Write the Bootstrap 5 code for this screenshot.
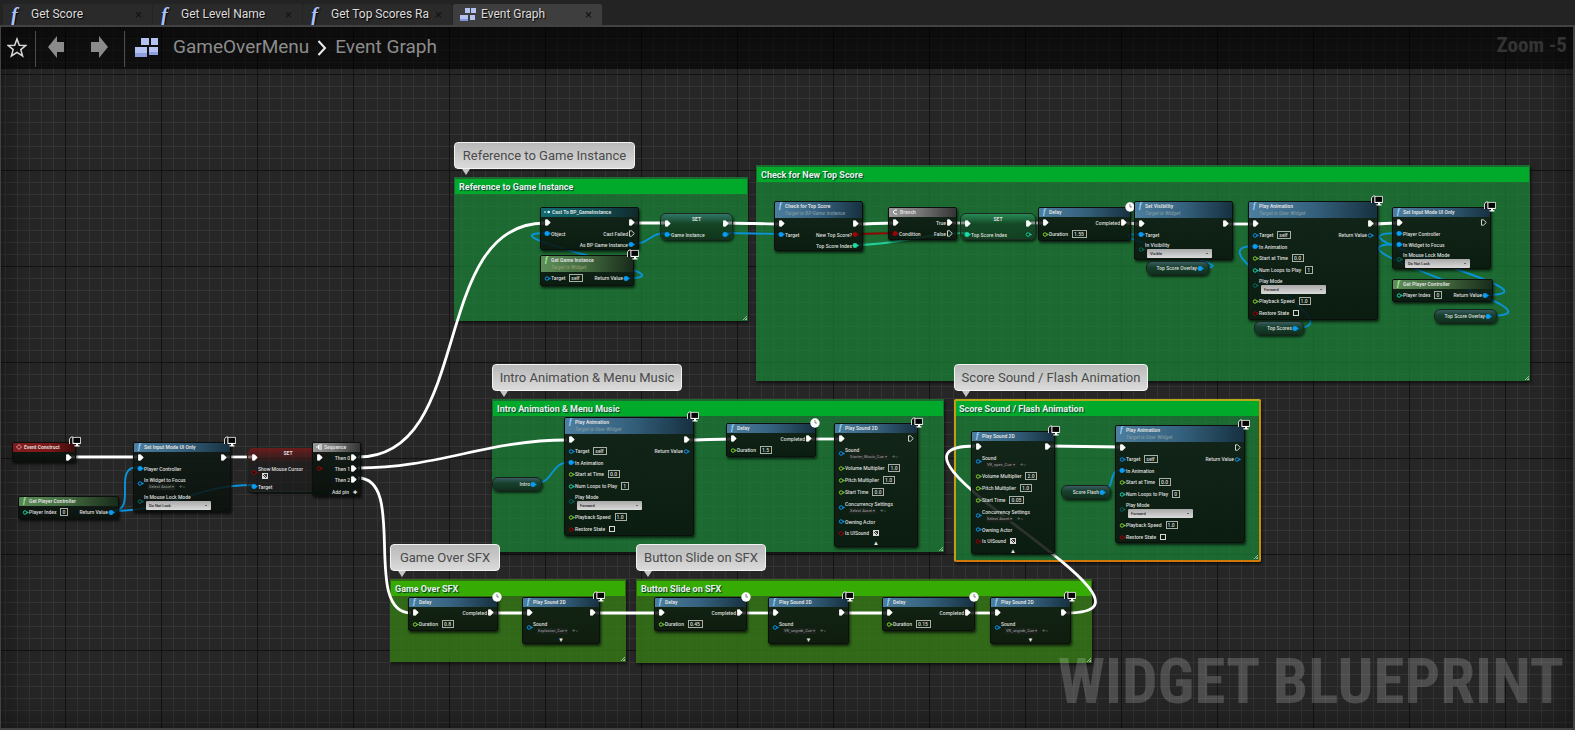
<!DOCTYPE html>
<html lang="en">
<head>
<meta charset="utf-8">
<meta name="viewport" content="width=device-width, initial-scale=1">
<title>GameOverMenu - Event Graph</title>
<link href="https://cdn.jsdelivr.net/npm/bootstrap@5.3.0/dist/css/bootstrap.min.css" rel="stylesheet">
<style>
  body { background: #232323; color: #d6d6d6; font-family: "Roboto Condensed", Roboto, "Liberation Sans", sans-serif; }

  /* document tabs */
  .tabs-strip { padding: 3px 3px 0; }
  .doc-tab { width: 150px; height: 22px; background: #2a2a2a; border-top: 1px solid #303030; color: #dcdcdc; padding: 0 6px;
    font: 12px/20px Roboto, sans-serif; text-shadow: 1px 1px 1px #000; border-radius: 3px 3px 0 0; }
  .doc-tab.active { background: #3e3e3e; border-top-color: #b5a316; }
  .doc-tab a { color: inherit; line-height: 19px; }
  .doc-tab button { color: #131313; font-size: 13px; line-height: 20px; }
  .fn-mark { width: 14px; font: italic bold 20px/20px "Liberation Serif", serif; color: #a9c2ff; padding-left: 2px; }

  /* graph surface */
  .graph { border: 2px solid #424242; border-left-width: 1px; background-color: #262626;
    background-image:
      linear-gradient(90deg, #131313 1px, transparent 1px), linear-gradient(#131313 1px, transparent 1px),
      linear-gradient(90deg, #343434 1px, transparent 1px), linear-gradient(#343434 1px, transparent 1px);
    background-size: 96px 96px, 96px 96px, 12px 12px, 12px 12px;
    background-position: 64px 47px, 64px 47px, 4px 11px, 4px 11px; }
  .graph::after { content: ""; position: absolute; inset: 0; pointer-events: none; box-shadow: inset 0 0 36px rgba(0,0,0,.5); }
  .crumbs { height: 42px; background: rgba(0,0,0,.6); color: #8c8c8c; font: 19px/40px Roboto, sans-serif; z-index: 3; padding-left: 6px; }
  .crumbs a { color: inherit; }
  .rule { width: 1px; height: 36px; background: #4c4c4c; }
  .zoom-level { color: #343434; font: bold 21px/36px "Roboto Condensed", "Liberation Sans Narrow", Roboto, sans-serif; padding-right: 6px; }
  .watermark { right: 9px; bottom: 12px; font: bold 63px/68px "Roboto Condensed", "Liberation Sans Narrow", Roboto, sans-serif;
    color: rgba(255,255,255,.18); z-index: 2; }
  .wires { inset: 0; width: 100%; height: 100%; fill: none; }

  /* comment boxes */
  .note { background: rgba(25,130,55,.75); box-shadow: 1px 2px 3px rgba(0,0,0,.6); padding: 2px 1px; }
  .note h2 { height: 15px; margin: 0; padding: 0 4px; background: #02aa2b; color: #e6f2e6; font: bold 9px/16px Roboto, sans-serif; text-shadow: 1px 1px 1px #033; }
  .note.lime { background: rgba(52,124,22,.78); }
  .note.lime h2 { background: #35ab03; }
  .note.picked { border: 2px solid #c79a10; border-color: #b9a916 #d08a0c #d0780c #c0a012; border-radius: 2px; padding: 0; }
  .note.picked h2 { padding: 0 3px; }
  .grip { right: 1px; bottom: 1px; width: 6px; height: 6px; background: repeating-linear-gradient(135deg, transparent 0 1px, #9db99d 1px 2px); clip-path: polygon(100% 0, 100% 100%, 0 100%); }
  .bubble { height: 27px; border: 1px solid #f2f2f2; border-radius: 4px; color: #4a4a4a;
    background: linear-gradient(rgba(190,190,190,.96), rgba(226,226,226,.96)); font: 13px/25px Roboto, sans-serif; }
  .bubble::after { content: ""; position: absolute; left: 7px; top: 26px; border: 4px solid transparent; border-top: 6px solid #c4c4c4; border-bottom: 0; }

  /* nodes */
  .bp { font: 500 5px/8px Roboto, sans-serif; color: #dedede; border-radius: 2px; border: 1px solid #0c0f0d;
    background: linear-gradient(rgba(16,26,20,.86), rgba(8,16,11,.86)); box-shadow: 1px 2px 3px rgba(0,0,0,.7); }
  .bp header { height: 9px; padding: 0 3px; border-radius: 1px 1px 0 0; font-weight: 700; line-height: 9px; }
  .bp header.tall { height: 16px; line-height: 8px; }
  .bp header i { font: italic bold 8px/8px "Liberation Serif", serif; color: #9bd4ff; width: 7px; padding-left: 1px; }
  .bp header svg { width: 6px; height: 6px; margin: 1px 2px 0 0; flex: none; }
  .bp header small { display: block; font: italic 500 5px/7px Roboto, sans-serif; color: #7f98a0; }
  .call header { background: linear-gradient(95deg, #4d7f9f, #35617e 50%, #16303f); }
  .pure header { background: linear-gradient(95deg, #5e8f5a, #42693f 50%, #182a19); }
  .pure header i { color: #a6f09a; }
  .pure header small { color: #8b9b6a; }
  .event header { background: linear-gradient(95deg, #8e2020, #7a1717 60%, #3a0c0c); }
  .cast header { background: linear-gradient(95deg, #126a70, #0f4e52 60%, #12282a); }
  .flow header { background: linear-gradient(95deg, #9a9a9a, #777 45%, #333); }
  .setter { border-radius: 6px; border: 1px solid #1c2a22; background: linear-gradient(rgba(70,130,160,.5), rgba(14,36,22,.55) 40%, rgba(10,26,16,.65)); }
  .setter.teal { background: linear-gradient(rgba(50,170,120,.5), rgba(14,46,28,.55) 40%, rgba(12,36,22,.6)); }
  .setter.red { background: linear-gradient(rgba(130,24,24,.75), rgba(30,26,26,.6) 35%, rgba(24,24,24,.6)); }
  .setter header { height: 4px; line-height: 10px; background: none; }
  .pill { border-radius: 6px; border: 1px solid #17241b; background: linear-gradient(#3a5a60, #16402c 45%, #12301f); }
  .pin-row { height: 11px; padding: 0 3px; white-space: nowrap; }
  .pill .pin-row { padding-right: 4px; }
  .h12 { height: 12px; } .h14 { height: 14px; } .h18 { height: 18px; } .h19 { height: 19px; }
  .pin { width: 7px; height: 7px; flex: none; }
  .bp input[type=text] { border: 1px solid #a9b0aa; background: transparent; color: inherit; font: inherit; height: 8px; padding: 0 1px; line-height: 6px; border-radius: 0; }
  .bp input[type=checkbox] { appearance: none; width: 6px; height: 6px; border: 1px solid #d8d8d8; margin: 0; }
  .bp input[type=checkbox]:checked { background: linear-gradient(45deg, #ddd 30%, #333 30% 45%, #ddd 45% 60%, #333 60%); }
  .bp select { appearance: none; display: block; width: 65px; height: 9px; border: 0; border-radius: 1px; padding: 0 3px; color: #222; font: 500 4px/9px Roboto, sans-serif; background: linear-gradient(#a9a9a9, #dadada); }
  .drop { margin-left: 2px; }
  .drop::after { content: ""; position: absolute; right: 4px; top: 4px; border: 1px solid transparent; border-top-color: #111; }
  .asset { font-size: 4px; line-height: 6px; color: #858c87; }
  .asset button { background: #1b211d; color: inherit; font: inherit; padding: 0 1px; border: 0; }
  .expander { height: 8px; color: #e8e8e8; font-size: 6px; line-height: 8px; }
  .marker { right: -6px; top: -7px; width: 12px; height: 11px; }
</style>
</head>
<body class="vh-100 d-flex flex-column overflow-hidden">

<nav class="tabs-strip d-flex" aria-label="Open graphs" id="tabs"></nav>

<main class="graph flex-grow-1 position-relative overflow-hidden">
  <div class="crumbs position-relative d-flex align-items-start">
    <button class="btn p-0 border-0 mt-2" aria-label="Favourite"><svg class="d-block" width="20" height="26" viewBox="0 0 20 24" fill="none" stroke="#d8d8d8" stroke-width="1.5"><path d="M10 3l2.300 6.200 6.700.2-5.200 4.200 1.800 6.400-5.600-3.700-5.600 3.700 1.800-6.400L1 9.400l6.700-.2z"/></svg></button>
    <span class="rule mt-1 ms-2"></span>
    <button class="btn p-0 border-0 ms-2 mt-2 ps-1" aria-label="Back"><svg class="d-block" width="18" height="24" viewBox="0 0 18 24"><path d="M0 12L9 1v6h7v10H9v6z" fill="#8b8b8b"/></svg></button>
    <button class="btn p-0 border-0 ms-4 mt-2" aria-label="Forward"><svg class="d-block" width="18" height="24" viewBox="0 0 18 24"><path d="M18 12L9 1v6H1v10h8v6z" fill="#8b8b8b"/></svg></button>
    <span class="rule mt-1 ms-3"></span>
    <svg class="ms-2 mt-2 me-2" width="28" height="24" viewBox="0 0 28 24"><g fill="#b4c2f0"><path d="M8 3h8v7H8zM18 3h7v7h-7zM2 12h12v10H2zM16 12h9v8h-9z"/></g><path d="M2 18h12v4H2zM16 17h9v3h-9z" fill="#8e9fe0"/></svg>
    <a class="text-decoration-none ms-1" href="#">GameOverMenu</a>
    <svg class="mt-2 mx-2" width="10" height="24" viewBox="0 0 10 24" fill="none" stroke="#eee" stroke-width="2"><path d="M1.500 6L8 13 1.500 20"/></svg>
    <a class="text-decoration-none" href="#">Event Graph</a>
    <span class="zoom-level ms-auto">Zoom -5</span>
  </div>
  <div id="notes"></div>
  <svg class="wires position-absolute" id="wires" aria-hidden="true"></svg>
  <div id="nodes"></div>
  <div id="bubbles"></div>
  <div class="watermark position-absolute">WIDGET BLUEPRINT</div>
</main>

<script src="https://cdn.jsdelivr.net/npm/bootstrap@5.3.0/dist/js/bootstrap.bundle.min.js"></script>
<script>
// Node coordinates are window coordinates; the surface starts below the tab strip and inside its border.
const OX = 1, OY = 27;
const at = (x, y, w) => `left:${x - OX}px;top:${y - OY}px;width:${w}px`;
const C = { blue: '#0a9df5', green: '#86d92c', teal: '#1fdba6', dim: '#0b6b62', red: '#9a0505', exec: '#fff' };
let seq = 0;

// ---- tabs
const widget = '<svg width="18" height="16" viewBox="0 0 18 16"><g fill="#b4c2f0"><path d="M6 1h5v5H6zM12 1h5v5h-5zM1 8h8v6H1zM11 8h5v5h-5z"/></g><path d="M1 12h8v2H1z" fill="#8294dc"/></svg>';
document.getElementById('tabs').innerHTML = ['Get Score', 'Get Level Name', 'Get Top Scores Ra', 'Event Graph'].map((t, i) =>
  `<div class="doc-tab d-flex align-items-center border-end border-dark ${i === 3 ? 'active' : ''}">
    ${i === 3 ? widget : '<span class="fn-mark" aria-hidden="true">f</span>'}
    <a href="#" class="text-decoration-none text-nowrap ${i === 3 ? 'ms-1' : 'ms-1 ps-1'}">${t}</a>
    <button class="btn p-0 border-0 ms-auto me-1" aria-label="Close ${t}">×</button></div>`).join('');

// ---- comment boxes: x, y, w, h, title, class, bubble width
const notes = [
  [454, 177, 294, 144, 'Reference to Game Instance', '', 181],
  [756, 165, 774, 216, 'Check for New Top Score', '', 0],
  [492, 399, 452, 153, 'Intro Animation & Menu Music', '', 190],
  [954, 399, 307, 163, 'Score Sound / Flash Animation', 'picked', 194],
  [390, 579, 236, 83, 'Game Over SFX', 'lime', 110],
  [636, 579, 456, 84, 'Button Slide on SFX', 'lime', 130]];
document.getElementById('notes').innerHTML = notes.map(([x, y, w, h, t, c]) =>
  `<section class="note position-absolute ${c}" style="${at(x, y, w)};height:${h}px"><h2>${t}</h2><span class="grip position-absolute"></span></section>`).join('');
document.getElementById('bubbles').innerHTML = notes.filter(n => n[6]).map(([x, y, , , t, , bw]) =>
  `<div class="bubble position-absolute text-center text-nowrap" style="${at(x, y - 35, bw)}">${t}</div>`).join('');

// ---- wires
const curve = (x1, y1, x2, y2, d) => `M${x1 - OX} ${y1 - OY}C${x1 + d - OX} ${y1 - OY} ${x2 - d - OX} ${y2 - OY} ${x2 - OX} ${y2 - OY}`;
const execs = [[71,457,137,457,20],[225,457,252,457,9],[634,223,667,223,9],[727,223,780,224,9],[857,224,893,223,9],[953,223,967,223,4],
  [1031,223,1043,223,4],[1126,223,1140,224,4],[1227,224,1254,224,9],[1373,224,1397,223,9],[688,440,731,439,9],[811,439,840,439,9],
  [493,613,528,613,9],[596,613,660,613,9],[742,613,774,613,9],[844,613,888,613,9],[970,613,996,613,9],[1049,446,1120,447,9],
  [358,457,545,223,117],[358,468,567,440,80],[358,478,411,613,50],[1067,613,975,446,127]];
const blues = [[112,511,138,467,27],[112,511,253,485,60],[627,278,547,233,75],[632,244,667,233,18],[725,233,780,234,9],[1200,268,1141,234,60],
  [1295,328,1255,246,66],[1485,295,1399,233,92],[1488,316,1399,244,96],[533,484,571,462,22],[1102,491,1121,470,14]];
const path = (list, color, w) => list.map(a => `<path d="${curve(...a)}" stroke="${color}" stroke-width="${w}"/>`).join('');
document.getElementById('wires').innerHTML = path(execs, '#fff', 2.8) + path(blues, '#0a93da', 1.9)
  + path([[855,234,895,233,9]], '#8c0606', 1.8) + path([[855,245,967,233,45]], '#22cf98', 1.8);

// ---- pins and rows
const pin = (c, on) => c === 'exec'
  ? `<svg class="pin" viewBox="0 0 7 7"><path d="M1.500 .8h2l2.800 2.700-2.800 2.700h-2z" fill="${on ? '#fff' : 'none'}" stroke="#fff" stroke-width=".8"/></svg>`
  : `<svg class="pin" viewBox="0 0 7 7"><circle cx="3" cy="3.500" r="${on ? 2.2 : 1.7}" fill="${on ? C[c] : '#08110c'}" stroke="${C[c]}" stroke-width="${on ? .6 : 1}"/><path d="M5.200 2.200L7 3.500 5.200 4.800z" fill="${C[c]}"/></svg>`;
// left side: [colour, connected, label, kind, value]; right side: [colour, connected, label]
function left(l) {
  if (!l) return '<span></span>';
  const [c, on, label = '', kind, v] = l, id = 'f' + (++seq);
  let body = label ? `<span>${label}</span>` : '';
  if (kind === 'val') body = `<label for="${id}">${label}</label><input type="text" class="ms-1" id="${id}" value="${v}" style="width:${v === 'self' ? 14 : v.length === 1 ? 8 : v.length * 3 + 3}px">`;
  if (kind === 'box') body = `<label for="${id}">${label}</label><input type="checkbox" class="ms-1" id="${id}" ${v ? 'checked' : ''}>`;
  if (kind === 'under') body = `<div><label class="d-block" for="${id}">${label}</label><input type="checkbox" class="d-block ms-1" id="${id}" checked></div>`;
  if (kind === 'sel') body = `<div><label class="d-block" for="${id}">${label}</label><div class="drop position-relative"><select id="${id}"><option>${v}</option></select></div></div>`;
  if (kind === 'asset') body = `<div><span class="d-block">${label}</span><div class="asset d-flex ms-1"><button type="button">${v}</button><span class="ms-1">✢ ⌕</span></div></div>`;
  return `<div class="d-flex align-items-center">${pin(c, on)}<div class="d-flex align-items-center">${body}</div></div>`;
}
const right = r => r ? `<div class="d-flex align-items-center"><span>${r[2] || ''}</span>${r[0] === 'plus' ? '<b class="ms-1">✚</b>' : pin(r[0], r[1])}</div>` : '<span></span>';
const height = (l, h) => h || (l && { val: 12, box: 12, sel: 19, asset: 18, under: 18 }[l[3]]) || 11;
const row = ([l, r, h]) => `<div class="pin-row h${height(l, h)} d-flex justify-content-between align-items-center">${left(l)}${right(r)}</div>`;

const E = ['exec', 1], E0 = ['exec', 0];
const animRows = (out, loops, start) => [[E, out], [['blue', 0, 'Target', 'val', 'self'], ['blue', 0, 'Return Value']], [['blue', 1, 'In Animation']],
  [['green', 0, 'Start at Time', 'val', start]], [['teal', 0, 'Num Loops to Play', 'val', loops]], [['dim', 0, 'Play Mode', 'sel', 'Forward']],
  [['green', 0, 'Playback Speed', 'val', '1.0']], [['red', 0, 'Restore State', 'box', 0]]];
const soundRows = (out, asset, vol, start) => [[E, out], [['blue', 0, 'Sound', 'asset', asset]], [['green', 0, 'Volume Multiplier', 'val', vol]],
  [['green', 0, 'Pitch Multiplier', 'val', '1.0']], [['green', 0, 'Start Time', 'val', start]], [['blue', 0, 'Concurrency Settings', 'asset', 'Select Asset ▾']],
  [['blue', 0, 'Owning Actor']], [['red', 0, 'Is UISound', 'box', 1]]];
const delay = v => [[E, [...E, 'Completed']], [['green', 0, 'Duration', 'val', v]]];
const gpc = [[['teal', 0, 'Player Index', 'val', '0'], ['blue', 1, 'Return Value'], 12]];
const mode = (out, w) => [[E, out], [['blue', 1, 'Player Controller']], [['blue', w, 'In Widget to Focus', w ? '' : 'asset', 'Select Asset ▾'], null], [['dim', 0, 'In Mouse Lock Mode', 'sel', 'Do Not Lock']]];

const icons = {
  f: '<i aria-hidden="true">f</i>',
  cast: '<svg viewBox="0 0 6 6"><path d="M0 3h2M4 2l2 1-2 1z" stroke="#dff" fill="#dff"/></svg>',
  branch: '<svg viewBox="0 0 6 6"><path d="M5 1H3L1 3l2 2h2" stroke="#fff" fill="none"/></svg>',
  seq: '<svg viewBox="0 0 6 6"><path d="M0 3h2M3 1h3M3 3h3M3 5h3M2.500 1v4" stroke="#fff" fill="none"/></svg>',
  ev: '<svg viewBox="0 0 6 6"><path d="M3 .5L.5 3 3 5.500 5.500 3z" stroke="#eaa" fill="none"/></svg>' };
const marks = {
  pc: '<svg class="marker position-absolute" viewBox="0 0 12 11"><path d="M.5 8V3l1.500-2h2v7" fill="#111" stroke="#eee" stroke-width=".9"/><path d="M4 1.400h7.500v6H4z" fill="#050505" stroke="#f4f4f4" stroke-width=".8"/><path d="M4 7h7.500v1H9v1.200h1.500v1.300h-5V9.200H7V8H4z" fill="#fff"/></svg>',
  clock: '<svg class="marker position-absolute" viewBox="0 0 12 11"><circle cx="6" cy="6" r="4.700" fill="#fff"/><path d="M6 3v3h2" fill="none" stroke="#666" stroke-width=".8"/></svg>' };

// kind, x, y, w, h, title, icon, subtitle, marker, rows, foot
const nodes = [
  ['event',12,442,64,20,'Event Construct','ev','','pc',[[null,E]]],
  ['call',133,442,98,70,'Set Input Mode UI Only','f','','pc',mode(E,0)],
  ['pure',18,496,101,23,'Get Player Controller','f','','',gpc],
  ['setter red',247,447,82,45,'SET','','','',[[E,null],[['red',0,'Show Mouse Cursor','under']],[['blue',1,'Target']]]],
  ['flow',312,442,49,54,'Sequence','seq','','',[[E,[...E,'Then 0']],[['red',0],[...E,'Then 1']],[null,[...E,'Then 2']],[null,['plus',0,'Add pin'],14]]],
  ['cast',540,207,99,43,'Cast To BP_GameInstance','cast','','',[[E,E],[['blue',1,'Object'],[...E0,'Cast Failed']],[null,['blue',1,'As BP Game Instance']]]],
  ['pure',540,255,94,31,'Get Game Instance','f','Target is Widget','pc',[[['blue',0,'Target','val','self'],['blue',1,'Return Value']]]],
  ['setter',660,213,73,27,'SET','','','',[[E,E],[['blue',1,'Game Instance'],['blue',1]]]],
  ['call',774,201,89,50,'Check for Top Score','f','Target is BP Game Instance','',[[E,E],[['blue',1,'Target'],['red',1,'New Top Score?']],[null,['teal',1,'Top Score Index']]]],
  ['flow',888,207,69,33,'Branch','branch','','',[[E,[...E,'True']],[['red',1,'Condition'],[...E0,'False']]]],
  ['setter teal',960,213,76,27,'SET','','','',[[E,E],[['teal',1,'Top Score Index'],['teal',0]]]],
  ['call',1038,207,93,34,'Delay','f','','clock',delay('1.55')],
  ['call',1134,201,99,59,'Set Visibility','f','Target is Widget','',[[E,E],[['blue',1,'Target']],[['dim',0,'In Visibility','sel','Visible']]]],
  ['call',1248,201,130,119,'Play Animation','f','Target is User Widget','pc',animRows(E,'1','0.0')],
  ['call',1392,207,99,62,'Set Input Mode UI Only','f','','pc',mode(E0,1)],
  ['pure',1392,279,101,23,'Get Player Controller','f','','',gpc],
  ['call',564,417,130,119,'Play Animation','f','Target is User Widget','pc',animRows(E,'1','0.0')],
  ['call',726,423,90,34,'Delay','f','','clock',delay('1.5')],
  ['call',834,423,84,124,'Play Sound 2D','f','','pc',soundRows(E0,'Starter_Music_Cue ▾','1.0','0.0'),'▲'],
  ['call',971,431,84,123,'Play Sound 2D','f','','pc',soundRows(E,'VR_open_Cue ▾','2.0','0.05'),'▲'],
  ['call',1115,425,130,118,'Play Animation','f','Target is User Widget','pc',animRows(E0,'0','0.0')],
  ['call',408,597,90,34,'Delay','f','','clock',delay('0.8')],
  ['call',522,597,78,47,'Play Sound 2D','f','','pc',[[E,E],[['blue',0,'Sound','asset','Explosion_Cue ▾']]],'▼'],
  ['call',654,597,93,34,'Delay','f','','clock',delay('0.45')],
  ['call',768,597,81,47,'Play Sound 2D','f','','pc',[[E,E],[['blue',0,'Sound','asset','VR_ungrab_Cue ▾']]],'▼'],
  ['call',882,597,93,34,'Delay','f','','clock',delay('0.15')],
  ['call',990,597,81,47,'Play Sound 2D','f','','pc',[[E,E],[['blue',0,'Sound','asset','VR_ungrab_Cue ▾']]],'▼']];
const pills = [[1146,261,63,'Top Score Overlay'],[1254,321,50,'Top Scores'],[1434,309,63,'Top Score Overlay'],[492,477,50,'Intro'],[1061,485,50,'Score Flash']];

document.getElementById('nodes').innerHTML = nodes.map(([k, x, y, w, h, t, ic, sub, m, rows, foot]) =>
  `<article class="bp ${k} position-absolute" style="${at(x, y, w)};height:${h}px">
    <header class="d-flex ${sub ? 'tall' : ''} ${ic ? '' : 'justify-content-center'}">${icons[ic] || ''}<div class="text-nowrap">${t}${sub ? `<small>${sub}</small>` : ''}</div></header>
    ${rows.map(row).join('')}${foot ? `<div class="expander text-center">${foot}</div>` : ''}${marks[m] || ''}</article>`).join('')
  + pills.map(([x, y, w, t]) => `<article class="bp pill position-absolute" style="${at(x, y, w)}"><div class="pin-row h12 d-flex align-items-center justify-content-end"><span>${t}</span>${pin('blue', 1)}</div></article>`).join('');
</script>
</body>
</html>
